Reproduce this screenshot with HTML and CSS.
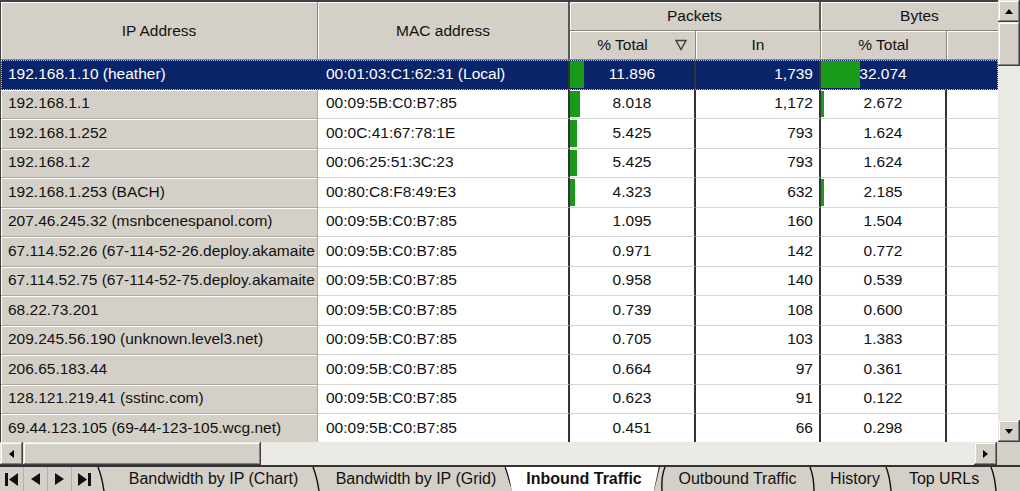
FILE: index.html
```html
<!DOCTYPE html>
<html>
<head>
<meta charset="utf-8">
<title>Inbound Traffic</title>
<link rel="stylesheet" href="styles.css">
</head>
<body>
<div class="app">
  <div class="main">
    <div class="grid">
      <div class="head">
        <div class="hc h-ip">IP Address</div>
        <div class="hc h-mac">MAC address</div>
        <div class="hc h-pk">Packets</div>
        <div class="hc h-by">Bytes</div>
        <div class="hc h-pt"><span class="ht">% Total</span><svg class="sort" width="12" height="12" viewBox="0 0 12 12"><polygon points="1,1.5 11,1.5 6,10.5" fill="none" stroke="#404040" stroke-width="1.4"/></svg></div>
        <div class="hc h-in">In</div>
        <div class="hc h-bt">% Total</div>
        <div class="hc h-x"></div>
      </div>
      <div class="body">
        <div class="row sel">
          <div class="c ip">192.168.1.10 (heather)</div>
          <div class="c mac">00:01:03:C1:62:31 (Local)</div>
          <div class="c pct bar" style="--w:14px">11.896</div>
          <div class="c num">1,739</div>
          <div class="c pct bar" style="--w:39px">32.074</div>
          <div class="c last"></div>
        </div>
        <div class="row">
          <div class="c ip">192.168.1.1</div>
          <div class="c mac">00:09:5B:C0:B7:85</div>
          <div class="c pct bar" style="--w:10px">8.018</div>
          <div class="c num">1,172</div>
          <div class="c pct bar" style="--w:3px">2.672</div>
          <div class="c last"></div>
        </div>
        <div class="row">
          <div class="c ip">192.168.1.252</div>
          <div class="c mac">00:0C:41:67:78:1E</div>
          <div class="c pct bar" style="--w:7px">5.425</div>
          <div class="c num">793</div>
          <div class="c pct">1.624</div>
          <div class="c last"></div>
        </div>
        <div class="row">
          <div class="c ip">192.168.1.2</div>
          <div class="c mac">00:06:25:51:3C:23</div>
          <div class="c pct bar" style="--w:7px">5.425</div>
          <div class="c num">793</div>
          <div class="c pct">1.624</div>
          <div class="c last"></div>
        </div>
        <div class="row">
          <div class="c ip">192.168.1.253 (BACH)</div>
          <div class="c mac">00:80:C8:F8:49:E3</div>
          <div class="c pct bar" style="--w:5px">4.323</div>
          <div class="c num">632</div>
          <div class="c pct bar" style="--w:3px">2.185</div>
          <div class="c last"></div>
        </div>
        <div class="row">
          <div class="c ip">207.46.245.32 (msnbcenespanol.com)</div>
          <div class="c mac">00:09:5B:C0:B7:85</div>
          <div class="c pct">1.095</div>
          <div class="c num">160</div>
          <div class="c pct">1.504</div>
          <div class="c last"></div>
        </div>
        <div class="row">
          <div class="c ip">67.114.52.26 (67-114-52-26.deploy.akamaite</div>
          <div class="c mac">00:09:5B:C0:B7:85</div>
          <div class="c pct">0.971</div>
          <div class="c num">142</div>
          <div class="c pct">0.772</div>
          <div class="c last"></div>
        </div>
        <div class="row">
          <div class="c ip">67.114.52.75 (67-114-52-75.deploy.akamaite</div>
          <div class="c mac">00:09:5B:C0:B7:85</div>
          <div class="c pct">0.958</div>
          <div class="c num">140</div>
          <div class="c pct">0.539</div>
          <div class="c last"></div>
        </div>
        <div class="row">
          <div class="c ip">68.22.73.201</div>
          <div class="c mac">00:09:5B:C0:B7:85</div>
          <div class="c pct">0.739</div>
          <div class="c num">108</div>
          <div class="c pct">0.600</div>
          <div class="c last"></div>
        </div>
        <div class="row">
          <div class="c ip">209.245.56.190 (unknown.level3.net)</div>
          <div class="c mac">00:09:5B:C0:B7:85</div>
          <div class="c pct">0.705</div>
          <div class="c num">103</div>
          <div class="c pct">1.383</div>
          <div class="c last"></div>
        </div>
        <div class="row">
          <div class="c ip">206.65.183.44</div>
          <div class="c mac">00:09:5B:C0:B7:85</div>
          <div class="c pct">0.664</div>
          <div class="c num">97</div>
          <div class="c pct">0.361</div>
          <div class="c last"></div>
        </div>
        <div class="row">
          <div class="c ip">128.121.219.41 (sstinc.com)</div>
          <div class="c mac">00:09:5B:C0:B7:85</div>
          <div class="c pct">0.623</div>
          <div class="c num">91</div>
          <div class="c pct">0.122</div>
          <div class="c last"></div>
        </div>
        <div class="row">
          <div class="c ip">69.44.123.105 (69-44-123-105.wcg.net)</div>
          <div class="c mac">00:09:5B:C0:B7:85</div>
          <div class="c pct">0.451</div>
          <div class="c num">66</div>
          <div class="c pct">0.298</div>
          <div class="c last"></div>
        </div>
      </div>
    </div>
    <div class="vscroll">
      <div class="sbtn"><svg width="8" height="5" viewBox="0 0 8 5"><path d="M4 0L8 5H0Z"/></svg></div>
      <div class="vthumb"></div>
      <div class="track"></div>
      <div class="sbtn"><svg width="8" height="5" viewBox="0 0 8 5"><path d="M0 0H8L4 5Z"/></svg></div>
    </div>
  </div>
  <div class="hscroll">
    <div class="hbar">
      <div class="sbtn"><svg width="5" height="8" viewBox="0 0 5 8"><path d="M5 0V8L0 4Z"/></svg></div>
      <div class="hthumb"></div>
      <div class="track"></div>
      <div class="sbtn"><svg width="5" height="8" viewBox="0 0 5 8"><path d="M0 0V8L5 4Z"/></svg></div>
    </div>
    <div class="corner"></div>
  </div>
  <div class="tabbar">
    <div class="nav">
      <div class="nb"><svg width="14" height="13" viewBox="0 0 14 13"><rect x="0" y="0" width="3" height="13"/><path d="M13 0V13L4 6.5Z"/></svg></div>
      <div class="nb"><svg width="9" height="12" viewBox="0 0 9 12"><path d="M9 0V12L0 6Z"/></svg></div>
      <div class="nb"><svg width="9" height="12" viewBox="0 0 9 12"><path d="M0 0V12L9 6Z"/></svg></div>
      <div class="nb"><svg width="14" height="13" viewBox="0 0 14 13"><path d="M0 0V13L9 6.5Z"/><rect x="10" y="0" width="3" height="13"/></svg></div>
    </div>
    <div class="tabs">
      <svg class="edge" width="8" height="24" viewBox="0 0 8 24"><path d="M1 0Q5 10 7 24" /></svg>
      <div class="tab t1">Bandwidth by IP (Chart)</div>
      <svg class="edge" width="8" height="24" viewBox="0 0 8 24"><path d="M1 0Q5 10 7 24" /></svg>
      <div class="tab t2">Bandwidth by IP (Grid)</div>
      <div class="tab active">
        <svg class="edge" width="8" height="24" viewBox="0 0 8 24"><path d="M1 0Q5 10 7 24" /></svg>
        <span class="atext">Inbound Traffic</span>
        <svg class="edge" width="6" height="24" viewBox="0 0 6 24"><path d="M5.5 0L0.5 24" /></svg>
      </div>
      <svg class="edge" width="6" height="24" viewBox="0 0 6 24"><path d="M5 0Q1 10 2 24" /></svg>
      <div class="tab t4">Outbound Traffic</div>
      <svg class="edge" width="6" height="24" viewBox="0 0 6 24"><path d="M1 0Q5 10 5 24" /></svg>
      <div class="tab t5">History</div>
      <svg class="edge" width="7" height="24" viewBox="0 0 7 24"><path d="M1 0Q5 10 6 24" /></svg>
      <div class="tab t6">Top URLs</div>
      <svg class="edge" width="7" height="24" viewBox="0 0 7 24"><path d="M1 0Q5 10 6 24" /></svg>
    </div>
  </div>
</div>
</body>
</html>
```

FILE: styles.css
```css
* { box-sizing: border-box; margin: 0; padding: 0; }
html, body { width: 1020px; height: 491px; overflow: hidden; }
body {
  font-family: "Liberation Sans", Arial, sans-serif;
  font-size: 15.5px;
  color: #111;
  background: #d4d0c8;
}
.app { display: flex; flex-direction: column; width: 1020px; height: 491px; }
.main { display: flex; height: 442px; flex: none; }

.grid {
  width: 998px;
  border-top: 2px solid #404040;
  border-left: 1px solid #404040;
  display: flex;
  flex-direction: column;
  overflow: hidden;
  background: #fff;
}
.head, .row {
  display: grid;
  grid-template-columns: 317px 252px 126px 125px 126px 51px;
}
.head {
  grid-template-rows: 29px 29px;
  background: #d4d0c8;
  flex: none;
}
.hc {
  display: flex;
  align-items: center;
  justify-content: center;
  white-space: nowrap;
  border-right: 1px solid #8a877f;
  border-bottom: 1px solid #8a877f;
  box-shadow: inset 1px 1px 0 #fff;
}
.h-ip { grid-row: 1 / 3; grid-column: 1; }
.h-mac { grid-row: 1 / 3; grid-column: 2; border-right: 2px solid #5a5852; }
.h-pk { grid-row: 1; grid-column: 3 / 5; border-right: 2px solid #5a5852; }
.h-by { grid-row: 1; grid-column: 5 / 7; padding-left: 20px; border-right: none; }
.h-pt { grid-row: 2; grid-column: 3; justify-content: flex-start; }
.h-pt .ht { flex: 1; text-align: center; }
.h-pt .sort { margin-right: 8px; flex: none; }
.h-in { grid-row: 2; grid-column: 4; }
.h-bt { grid-row: 2; grid-column: 5; }
.h-x { grid-row: 2; grid-column: 6; border-right: none; }

.body { flex: 1; overflow: hidden; display: flex; flex-direction: column; }
.row { height: 29.5px; flex: none; }
.c {
  display: flex;
  align-items: center;
  padding: 0 7px 1px;
  white-space: nowrap;
  overflow: hidden;
  border-bottom: 1px solid #d6d6d6;
  background-color: #fff;
}
.ip {
  background-color: #d4d0c8;
  border-bottom: 1px solid #aeaaa2;
  border-right: 1px solid #aeaaa2;
  box-shadow: inset 0 1px 0 #fff, inset 1px 0 0 #fff;
  padding-right: 0;
}
.mac { padding-left: 8px; border-right: 2px solid #333; }
.pct { justify-content: center; border-right: 2px solid #333; }
.num { justify-content: flex-end; border-right: 2px solid #333; padding-right: 6px; }
.last { padding: 0; }
.bar {
  background-image: linear-gradient(#1a9a1a, #1a9a1a);
  background-repeat: no-repeat;
  background-position: 0 1px;
  background-size: var(--w) calc(100% - 2px);
}
.row.sel { outline: 1px dotted #b8c0d8; outline-offset: -1px; }
.row.sel .c {
  background-color: #0a246a;
  color: #fff;
  border-bottom-color: #0a246a;
  box-shadow: none;
}
.row.sel .ip { border-right-color: #0a246a; }
.row.sel .pct:nth-child(5) { border-right-color: #0a246a; }

/* scrollbars */
.sbtn {
  width: 22px;
  height: 22px;
  flex: none;
  display: flex;
  align-items: center;
  justify-content: center;
  background: #d4d0c8;
  box-shadow: inset -1px -1px 0 #404040, inset 1px 1px 0 #e8e6e2, inset -2px -2px 0 #808080, inset 2px 2px 0 #fff;
}
.sbtn svg { fill: #000; }
.track { flex: 1; background: #ebe9e4; }
.vscroll { width: 22px; display: flex; flex-direction: column; }
.vthumb, .hthumb {
  flex: none;
  background: #d4d0c8;
  box-shadow: inset -1px -1px 0 #404040, inset 1px 1px 0 #e8e6e2, inset -2px -2px 0 #808080, inset 2px 2px 0 #fff;
}
.vthumb { height: 44px; }
.hscroll { display: flex; height: 23px; flex: none; }
.hbar { width: 997px; display: flex; }
.hbar .sbtn { height: 23px; width: 23px; }
.hthumb { width: 238px; }
.corner { flex: 1; background: #d4d0c8; }

/* sheet tabs */
.tabbar {
  height: 26px;
  flex: none;
  border-top: 2px solid #333;
  display: flex;
  background: #d4d0c8;
  font-size: 16px;
  color: #111;
}
.nav { display: flex; width: 97px; flex: none; }
.nb {
  width: 24px;
  display: flex;
  align-items: center;
  justify-content: center;
  border-right: 1px solid #b4b0a8;
}
.nb:last-child { border-right: none; width: 25px; }
.nb svg { fill: #111; }
.tabs { display: flex; flex: 1; }
.edge { flex: none; display: block; }
.edge path { fill: none; stroke: #111; stroke-width: 1.4; }
.tab {
  display: flex;
  align-items: center;
  justify-content: center;
  white-space: nowrap;
  flex: none;
}
.t1 { width: 207px; padding-left: 10px; }
.t2 { width: 192px; }
.active {
  width: 156px;
  margin-left: -8px;
  background: #fff;
  font-weight: bold;
  clip-path: polygon(0 0, 100% 0, calc(100% - 6px) 100%, 8px 100%);
  justify-content: space-between;
  align-items: stretch;
}
.atext { display: flex; align-items: center; padding-left: 2px; }
.t4 { width: 143px; }
.t5 { width: 70px; padding-left: 10px; }
.t6 { width: 98px; padding-left: 6px; }
```
